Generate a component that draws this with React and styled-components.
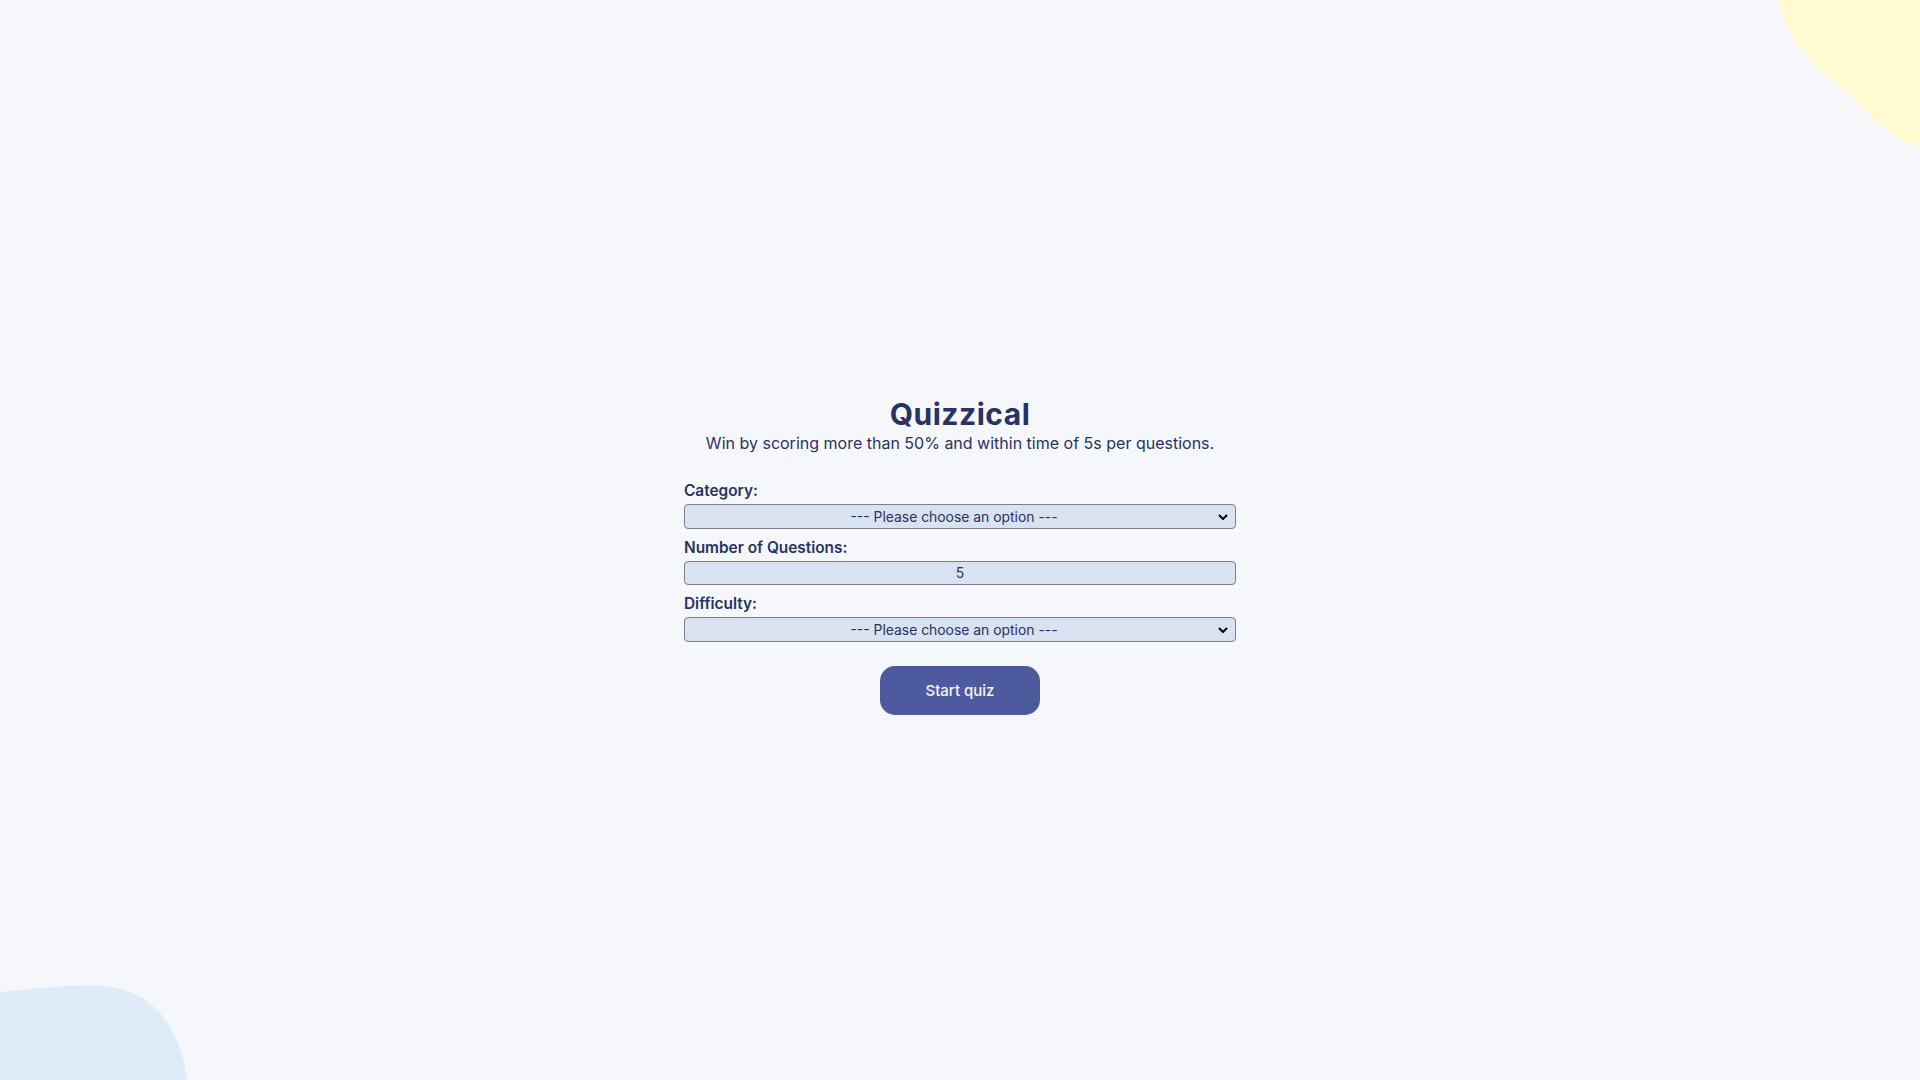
import React, { useState } from "react"
import styled, { createGlobalStyle } from "styled-components"

const GlobalStyle = createGlobalStyle`
  html, body {
    margin: 0;
    padding: 0;
    background: #F5F7FB;
    font-family: "Inter", "Liberation Sans", sans-serif;
    color: #293264;
  }
  * { box-sizing: border-box; }
`

const Page = styled.main`
  position: relative;
  min-height: 100vh;
  overflow: hidden;
  display: flex;
  flex-direction: column;
  align-items: center;
  padding-top: 396px;
`

const Blob = styled.svg`
  position: absolute;
  pointer-events: none;
  ${props => props.corner === "top" ? "top: 0; right: 0;" : "bottom: 0; left: 0;"}
`

const Title = styled.h1`
  margin: 0;
  font-size: 30px;
  font-weight: 700;
  letter-spacing: 0.5px;
  color: #293264;
  line-height: 36px;
`

const Subtitle = styled.p`
  margin: 1px 0 29px;
  font-size: 16px;
  color: #293264;
  line-height: 20px;
`

const Form = styled.form`
  width: 552px;
  display: flex;
  flex-direction: column;
`

const Label = styled.label`
  font-size: 15.4px;
  font-weight: 600;
  color: #293264;
  line-height: 18px;
  margin-bottom: 4px;
`

const fieldStyle = `
  width: 100%;
  height: 25px;
  background: #D9E2F0;
  border: 1px solid #7B7F8B;
  border-radius: 4px;
  color: #293264;
  font-family: "Inter", "Liberation Sans", sans-serif;
  font-size: 13.9px;
  text-align: center;
  text-align-last: center;
  margin-bottom: 10px;
`

const Select = styled.select`
  ${fieldStyle}
  appearance: none;
  padding: 0 16px 0 4px;
  background-image: url("data:image/svg+xml;utf8,<svg xmlns='http://www.w3.org/2000/svg' width='10' height='6' viewBox='0 0 10 6'><path d='M1 1l4 4 4-4' fill='none' stroke='%23000' stroke-width='2'/></svg>");
  background-repeat: no-repeat;
  background-position: right 7px center;
`

const Input = styled.input`
  ${fieldStyle}
  height: 24px;
  padding: 0;
  appearance: textfield;
  -moz-appearance: textfield;

  &::-webkit-outer-spin-button,
  &::-webkit-inner-spin-button {
    -webkit-appearance: none;
    margin: 0;
  }
`

const Button = styled.button`
  align-self: center;
  margin-top: 14px;
  width: 160px;
  height: 49px;
  border: none;
  border-radius: 15px;
  background: #4D5B9E;
  color: #F5F7FB;
  font-family: "Inter", "Liberation Sans", sans-serif;
  font-size: 15px;
  font-weight: 500;
  cursor: pointer;
`

export default function App() {
  const [amount, setAmount] = useState(5)
  return (
    <>
      <GlobalStyle />
      <Page>
        <Blob corner="top" width="140" height="146" viewBox="0 0 140 146">
          <path d="M0 0 C2 40 40 70 75 100 C95 118 110 140 140 146 L140 0 Z" fill="#FFFAD1" />
        </Blob>
        <Blob corner="bottom" width="190" height="96" viewBox="0 0 190 96">
          <path d="M0 8 C40 4 80 0 105 2 C150 6 180 40 187 96 L0 96 Z" fill="#DEEBF8" />
        </Blob>
        <Title>Quizzical</Title>
        <Subtitle>Win by scoring more than 50% and within time of 5s per questions.</Subtitle>
        <Form onSubmit={e => e.preventDefault()}>
          <Label htmlFor="category">Category:</Label>
          <Select id="category" defaultValue="">
            <option value="">--- Please choose an option ---</option>
          </Select>
          <Label htmlFor="amount">Number of Questions:</Label>
          <Input id="amount" type="number" value={amount} onChange={e => setAmount(e.target.value)} />
          <Label htmlFor="difficulty">Difficulty:</Label>
          <Select id="difficulty" defaultValue="">
            <option value="">--- Please choose an option ---</option>
          </Select>
          <Button type="submit">Start quiz</Button>
        </Form>
      </Page>
    </>
  )
}
